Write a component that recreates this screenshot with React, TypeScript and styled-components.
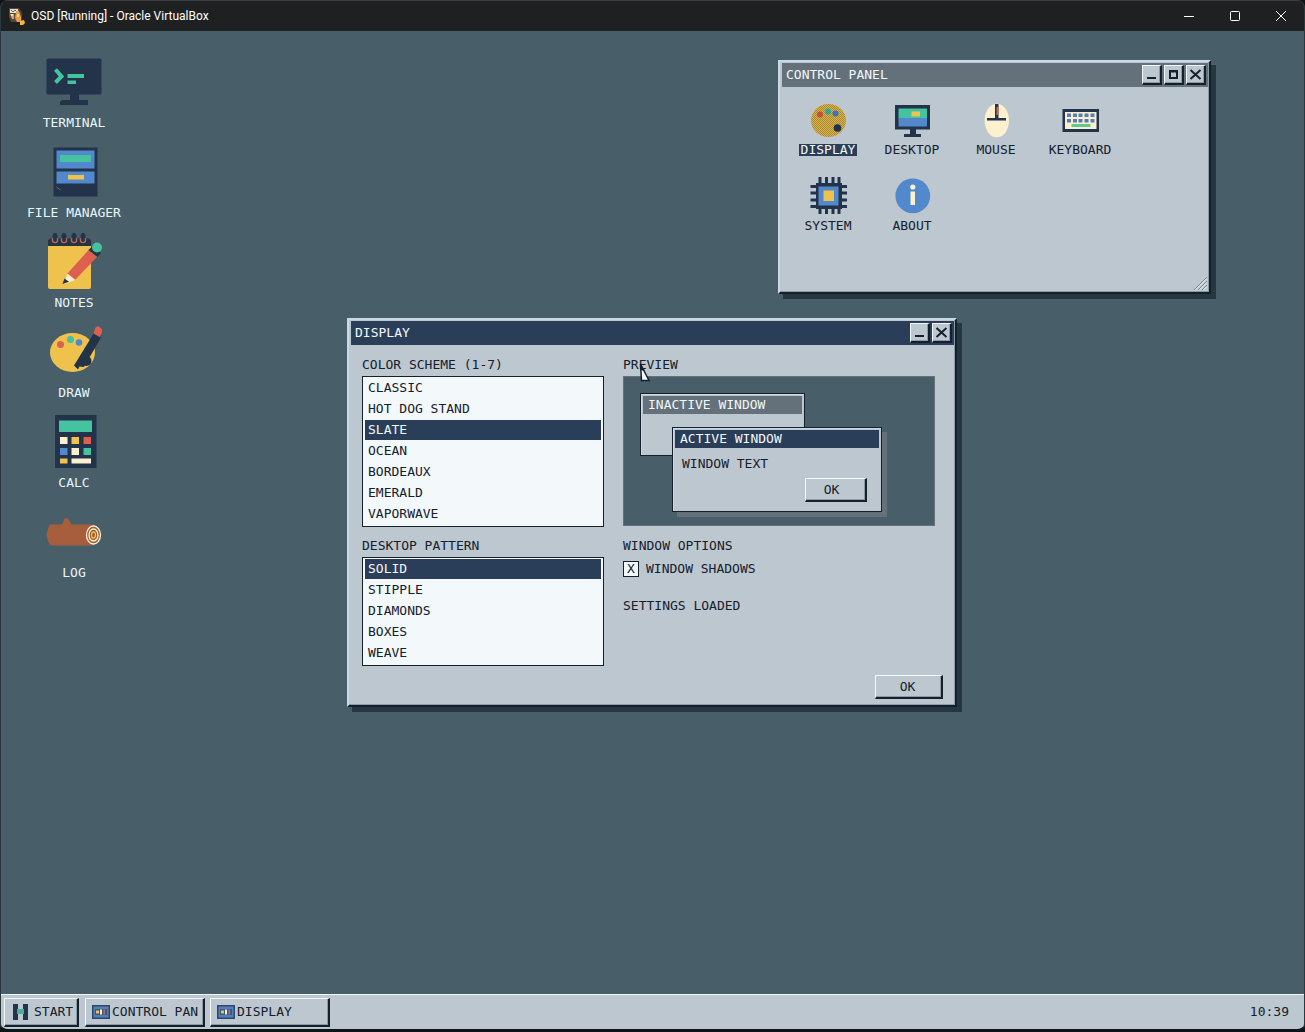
import React, { useState } from "react";
import styled, { createGlobalStyle, css } from "styled-components";

const c = {
  desk: "#485e69",
  panel: "#bdc7d0",
  light: "#c9dae4",
  white: "#f3f8fa",
  ink: "#14202b",
  navy: "#2b3e59",
  slate: "#64717a",
  shadow: "#253740",
  iconNavy: "#22334a",
  green: "#45c2a0",
  blue: "#5288cc",
  yellow: "#eec24c",
  red: "#dd5f50",
  cream: "#fdf0cf",
};

const GlobalStyle = createGlobalStyle`
  *, *::before, *::after { box-sizing: border-box; }
  body { margin: 0; background: #0c1418; }
  button, input { font: inherit; color: inherit; }
`;

const Frame = styled.div`
  min-height: 100vh;
  display: flex;
  flex-direction: column;
  border: solid #2a383f;
  border-width: 0 1px 3px;
  border-bottom-color: #0c1418;
  border-radius: 8px;
  overflow: hidden;
  background: ${c.desk};
  color: ${c.ink};
  font: 13px/16px "DejaVu Sans Mono", monospace;
`;

const HostBar = styled.header`
  display: flex;
  align-items: center;
  height: 31px;
  padding-left: 8px;
  background: #1f2021;
  border-top: 1px solid #3a3c3d;
  color: #fff;
  font: 12px/16px Roboto, sans-serif;
`;

const HostTitle = styled.h1`
  margin: 0 0 0 6px;
  flex: 1;
  font: inherit;
`;

const HostButton = styled.button`
  display: grid;
  place-items: center;
  width: 46px;
  height: 30px;
  padding: 0;
  border: 0;
  background: none;
`;

const Desktop = styled.main`
  position: relative;
  flex: 1;
  padding: 20px 0 0;
`;

const Shortcuts = styled.nav`
  display: flex;
  flex-direction: column;
  width: 146px;
`;

const Shortcut = styled.button`
  display: flex;
  flex-direction: column;
  align-items: center;
  gap: 4px;
  height: 90px;
  padding: 0;
  border: 0;
  background: none;
  color: #eaf6fb;
`;

const WindowBox = styled.section<{ $x: number; $y: number; $w: number }>`
  position: absolute;
  left: ${(p) => p.$x}px;
  top: ${(p) => p.$y}px;
  width: ${(p) => p.$w}px;
  padding: 1px 1px 0 2px;
  border: 2px solid ${c.light};
  border-right-color: ${c.ink};
  border-bottom-color: ${c.ink};
  background: ${c.panel};
  box-shadow: inset -1px -1px 0 #8c9aa5, 5px 5px 0 ${c.shadow};
`;

const TitleBar = styled.header<{ $active?: boolean }>`
  display: flex;
  align-items: center;
  gap: 2px;
  height: 24px;
  padding: 0 2px 1px 4px;
  background: ${(p) => (p.$active ? c.navy : c.slate)};
  color: ${c.white};
`;

const WindowTitle = styled.h2`
  margin: 0;
  flex: 1;
  font: inherit;
`;

const raised = css`
  border: 2px solid ${c.ink};
  border-top: 1px solid ${c.white};
  border-left: 1px solid ${c.white};
  background: ${c.panel};
  box-shadow: inset -1px -1px 0 #8c9aa5;
`;

const FrameButton = styled.button`
  ${raised}
  display: grid;
  place-items: center;
  width: 20px;
  height: 20px;
  padding: 0;
`;

const PanelIcons = styled.div`
  display: grid;
  grid-template-columns: repeat(auto-fill, 84px);
  grid-auto-rows: 76px;
  padding: 13px 4px 0;
`;

const PanelItem = styled.button`
  display: flex;
  flex-direction: column;
  align-items: center;
  gap: 4px;
  padding: 0;
  border: 0;
  background: none;
`;

const PanelLabel = styled.span<{ $selected?: boolean }>`
  padding: 0 2px;
  line-height: 12px;
  background: ${(p) => (p.$selected ? c.navy : "transparent")};
  color: ${(p) => (p.$selected ? c.white : c.ink)};
`;

const PanelFoot = styled.footer`
  display: flex;
  justify-content: flex-end;
  height: 40px;
  align-items: flex-end;
  padding: 0 1px 2px;
`;

const Settings = styled.div`
  display: grid;
  grid-template-columns: 242px 1fr;
  gap: 11px 19px;
  padding: 12px 19px 0 11px;
`;

const Group = styled.fieldset`
  display: flex;
  flex-direction: column;
  min-width: 0;
  margin: 0;
  padding: 0;
  border: 0;
`;

const Caption = styled.legend`
  padding: 0;
  margin-bottom: 3px;
`;

const List = styled.div`
  display: flex;
  flex-direction: column;
  gap: 1px;
  padding: 1px;
  padding-bottom: 2px;
  border: 1px solid ${c.ink};
  background: ${c.white};
`;

const Option = styled.label`
  display: flex;
  align-items: center;
  height: 20px;
  margin: 0 1px;
  padding-left: 3px;
  &:has(input:checked) {
    background: ${c.navy};
    color: ${c.white};
  }
`;

const Radio = styled.input`
  appearance: none;
  width: 0;
  height: 0;
  margin: 0;
`;

const Preview = styled.div`
  position: relative;
  height: 150px;
  border: 1px solid ${c.slate};
  background: ${c.desk};
`;

const Mini = styled.div<{ $x: number; $y: number; $w: number; $h: number; $shadow?: boolean }>`
  position: absolute;
  left: ${(p) => p.$x}px;
  top: ${(p) => p.$y}px;
  width: ${(p) => p.$w}px;
  height: ${(p) => p.$h}px;
  display: flex;
  flex-direction: column;
  padding: 2px;
  border: 1px solid ${c.ink};
  background: ${c.panel};
  box-shadow: inset 1px 1px 0 ${c.light}${(p) => (p.$shadow ? `, 5px 5px 0 ${c.slate}` : "")};
`;

const MiniTitle = styled.div<{ $active?: boolean }>`
  height: 18px;
  line-height: 18px;
  padding-left: 5px;
  background: ${(p) => (p.$active ? c.navy : c.slate)};
  color: ${c.white};
`;

const MiniBody = styled.div`
  display: flex;
  flex-direction: column;
  padding: 8px 12px 0 7px;
  gap: 6px;
`;

const PushButton = styled.button<{ $small?: boolean }>`
  ${raised}
  align-self: flex-end;
  width: ${(p) => (p.$small ? 62 : 68)}px;
  height: 24px;
  padding: 0 ${(p) => (p.$small ? 8 : 2)}px 0 0;
  line-height: 16px;
`;

const CheckRow = styled.label`
  display: flex;
  align-items: center;
  gap: 7px;
  margin-top: 4px;
`;

const Check = styled.input`
  appearance: none;
  display: grid;
  place-items: center;
  width: 16px;
  height: 16px;
  margin: 0;
  border: 1px solid ${c.ink};
  background: ${c.white};
  font-size: 13px;
  line-height: 14px;
  &:checked::before {
    content: "X";
  }
`;

const Status = styled.output`
  margin-top: 21px;
`;

const DialogFoot = styled.footer`
  display: flex;
  justify-content: flex-end;
  padding: 9px 11px 6px;
`;

const Taskbar = styled.footer`
  display: flex;
  align-items: center;
  gap: 5px;
  height: 35px;
  padding: 0 15px 0 3px;
  border-top: 1px solid ${c.white};
  background: ${c.panel};
`;

const TaskButton = styled.button<{ $start?: boolean }>`
  ${raised}
  display: flex;
  align-items: center;
  gap: ${(p) => (p.$start ? 5 : 2)}px;
  width: ${(p) => (p.$start ? 75 : 120)}px;
  height: 29px;
  margin-right: ${(p) => (p.$start ? 1 : 0)}px;
  padding: 0 0 0 ${(p) => (p.$start ? 8 : 6)}px;
  white-space: nowrap;
`;

const Clock = styled.time`
  margin-left: auto;
`;

const Pointer = styled.svg`
  position: absolute;
  left: 637px;
  top: 331px;
`;

const Art = ({ size, children }: { size: number; children: React.ReactNode }) => (
  <svg width={size} height={size} viewBox={`0 0 ${size} ${size}`} aria-hidden="true">
    {children}
  </svg>
);

const terminalArt = (
  <>
    <rect x="2.5" y="7.5" width="55" height="36" rx="1.5" fill={c.iconNavy} />
    <path d="M26 43h9v6h9v5H16v-3l2-2h8z" fill={c.iconNavy} />
    <path d="M11.5 18.5l6 7-6 6" fill="none" stroke={c.green} strokeWidth="4" />
    <path d="M23.5 23H40v4H23.500zM23.500 29.500H32V33h-8.500z" fill={c.green} />
  </>
);

const cabinetArt = (
  <>
    <rect x="9.5" y="6.5" width="44" height="49" fill={c.iconNavy} />
    <path d="M12.5 9.5h38v18h-38zM12.5 30.5h38v12h-38z" fill={c.blue} />
    <path d="M16 14h31v7H16z" fill={c.green} />
    <path d="M24 34h16v4.500H24z" fill={c.yellow} />
    <path d="M12.5 46l4 3" stroke="#617181" />
  </>
);

const notesArt = (
  <>
    <rect x="4" y="12" width="43" height="46" rx="2" fill={c.yellow} />
    <path d="M6 7.5h39l2 2V15H4V9.500z" fill={c.iconNavy} />
    {[11, 20, 30, 39].map((x) => (
      <g key={x}>
        <circle cx={x} cy="9" r="2.6" fill="none" stroke="#c0684c" strokeWidth="1.4" />
        <path d={`M${x} 2v7`} stroke={c.iconNavy} strokeWidth="3" />
        <path d={`M${x - 2.5} 5.500h5`} stroke={c.iconNavy} strokeWidth="3.5" />
      </g>
    ))}
    <path d="M23 43L45 18.500l8.500 7L31 49z" fill={c.red} />
    <path d="M23.500 42.500l8 6.500L20 53z" fill={c.cream} />
    <path d="M20.500 47.500l4.500 3.200L18.500 53z" fill={c.iconNavy} />
    <path d="M44.500 19l4-4 8.500 7-3.500 4z" fill={c.iconNavy} />
    <circle cx="53" cy="16.500" r="5" fill={c.green} />
  </>
);

const drawArt = (
  <>
    <ellipse cx="28.5" cy="31.5" rx="22.5" ry="19.5" fill={c.yellow} />
    <circle cx="16.5" cy="23.500" r="3.500" fill={c.red} />
    <circle cx="26.5" cy="18.500" r="3.500" fill={c.green} />
    <circle cx="35" cy="21.500" r="3.300" fill={c.blue} />
    <circle cx="42.500" cy="40" r="5" fill={c.iconNavy} />
    <path d="M50 12l7 4.500L40 46l-4.500-.5-1.500 3-4-4z" fill={c.iconNavy} />
    <path d="M49.500 12.500l2-6 2.500-1.500 4 3v3.500l-2.500 4.500z" fill={c.red} />
  </>
);

const calcArt = (
  <>
    <rect x="11" y="4" width="41.500" height="53" fill={c.iconNavy} />
    <path d="M15 9.500h33V21H15z" fill={c.green} />
    <path d="M16 26h7.500v7H16zM27.500 37H35v7h-7.500zM27.500 47.500H47v5H27.500z" fill={c.cream} />
    <path d="M27.500 26H35v7h-7.500zM16 47.500h7.500v5H16z" fill={c.yellow} />
    <path d="M39.500 26H47v7h-7.500z" fill={c.red} />
    <path d="M16 37h7.500v7H16z" fill={c.blue} />
    <path d="M39.500 37H47v7h-7.500z" fill={c.green} />
  </>
);

const logArt = (
  <>
    <path d="M6 23.500h12l2-5 3-2 5 7h22v21H7l-3-4-1.500-7 1.500-6z" fill="#a65e3c" />
    <g fill="#9b5a35" stroke={c.cream} strokeWidth="1.300">
      <ellipse cx="49.500" cy="34" rx="7" ry="9" />
      <ellipse cx="49.500" cy="34" rx="4.500" ry="6" />
      <ellipse cx="49.500" cy="34" rx="2" ry="3" stroke={c.yellow} />
    </g>
  </>
);

const paletteArt = (
  <>
    <defs>
      <pattern id="dither" width="2" height="2" patternUnits="userSpaceOnUse">
        <path d="M0 0h1v1H0zM1 1h1v1H1z" fill={c.navy} fillOpacity="0.38" />
      </pattern>
    </defs>
    <ellipse cx="20.500" cy="20.500" rx="17.500" ry="16.500" fill="#e4b43a" />
    <circle cx="12" cy="14.500" r="3" fill="#e5553f" />
    <circle cx="20" cy="11.500" r="3" fill="#30c2a0" />
    <circle cx="27.500" cy="13.500" r="3" fill="#3f7fd6" />
    <ellipse cx="20.500" cy="20.500" rx="17.500" ry="16.500" fill="url(#dither)" />
    <circle cx="29.500" cy="28" r="3.800" fill={c.iconNavy} />
  </>
);

const monitorArt = (
  <>
    <path d="M3 5h35v24.500H24V34h5v3H12v-3h6v-4.500H3z" fill={c.iconNavy} />
    <path d="M6.500 8.500H35V18H6.500z" fill={c.green} />
    <path d="M6.500 18H35v8.500H6.500z" fill={c.blue} />
    <path d="M19.500 11.500H28v5h-8.500z" fill={c.yellow} />
  </>
);

const mouseArt = (
  <>
    <ellipse cx="20.800" cy="20.500" rx="12.200" ry="16.800" fill={c.cream} />
    <path d="M19 4h3.500v14H30v2.500H11V18h8z" fill={c.iconNavy} />
    <path d="M20.500 7h2v8h-2z" fill={c.red} />
  </>
);

const keyboardArt = (
  <>
    <path d="M2.500 9H39v23H2.500z" fill={c.iconNavy} />
    <path d="M5 12h31.500v17H5z" fill={c.cream} />
    {[7, 13, 18.5, 24.5, 30.5].map((x) => (
      <path key={x} d={`M${x} 13.500h4V17h-4zM${x} 19h4v3.500h-4z`} fill="#557fba" />
    ))}
    <path d="M11.500 24h19v3h-19z" fill="#62c892" />
  </>
);

const chipArt = (
  <>
    <path
      d="M12 1v37M18.500 1v37M25 1v37M31 1v37M2.500 10.500H39M2.500 17H39M2.500 24H39M2.500 30.500H39"
      stroke={c.iconNavy}
      strokeWidth="3"
    />
    <path d="M8 7h26v26H8z" fill={c.iconNavy} />
    <path d="M10.500 10.500h20v19h-20z" fill={c.blue} />
    <path d="M15.500 14.500H26V25H15.500z" fill={c.yellow} />
  </>
);

const infoArt = (
  <>
    <circle cx="20.800" cy="19.800" r="17.400" fill={c.blue} />
    <circle cx="20.800" cy="11" r="2.600" fill={c.cream} />
    <path d="M18.500 15.500H23V29h-4.500z" fill={c.cream} />
  </>
);

const shortcuts: [string, React.ReactNode][] = [
  ["TERMINAL", terminalArt],
  ["FILE MANAGER", cabinetArt],
  ["NOTES", notesArt],
  ["DRAW", drawArt],
  ["CALC", calcArt],
  ["LOG", logArt],
];

const panelItems: [string, React.ReactNode][] = [
  ["DISPLAY", paletteArt],
  ["DESKTOP", monitorArt],
  ["MOUSE", mouseArt],
  ["KEYBOARD", keyboardArt],
  ["SYSTEM", chipArt],
  ["ABOUT", infoArt],
];

const schemes = ["CLASSIC", "HOT DOG STAND", "SLATE", "OCEAN", "BORDEAUX", "EMERALD", "VAPORWAVE"];
const patterns = ["SOLID", "STIPPLE", "DIAMONDS", "BOXES", "WEAVE"];

const glyphs = {
  Minimize: <path d="M4 12h9" strokeWidth="2" />,
  Maximize: <path d="M5 5h7v7H5zM4 5.500h9" strokeWidth="2" />,
  Close: <path d="M3.500 4l10 9M13.500 4l-10 9" strokeWidth="2" />,
};

const WindowControl = ({ kind }: { kind: keyof typeof glyphs }) => (
  <FrameButton type="button" aria-label={kind}>
    <svg width="17" height="17" viewBox="0 0 17 17" fill="none" stroke={c.ink}>
      {glyphs[kind]}
    </svg>
  </FrameButton>
);

const ChoiceList = ({ caption, name, items, initial }: { caption: string; name: string; items: string[]; initial: string }) => {
  const [value, setValue] = useState(initial);
  return (
    <Group>
      <Caption>{caption}</Caption>
      <List>
        {items.map((item) => (
          <Option key={item}>
            <Radio type="radio" name={name} checked={value === item} onChange={() => setValue(item)} />
            {item}
          </Option>
        ))}
      </List>
    </Group>
  );
};

const TaskIcon = () => (
  <svg width="18" height="14" viewBox="0 0 18 14" aria-hidden="true">
    <path d="M0 0h18v14H0z" fill="#2d466c" />
    <path d="M1.500 1.500h15v11h-15z" fill="#5680b4" />
    <path d="M3 4h12v6H3z" fill="#375987" />
    <path d="M4 5.500h3v3H4z" fill={c.yellow} />
    <path d="M8 4.500h2v5H8z" fill={c.cream} />
    <path d="M11.500 4.500H13v5h-1.500z" fill="#b9736e" />
  </svg>
);

const hostGlyphs: [string, string][] = [
  ["Minimize window", "M1 6.500h10"],
  ["Maximize window", "M2.500 1.500h7a1 1 0 0 1 1 1v7a1 1 0 0 1-1 1h-7a1 1 0 0 1-1-1v-7a1 1 0 0 1 1-1z"],
  ["Close window", "M1 1l10 10M11 1L1 11"],
];

export default function App() {
  const [shadows, setShadows] = useState(true);
  return (
    <>
      <GlobalStyle />
      <Frame>
        <HostBar>
          <svg width="16" height="17" viewBox="0 0 16 17" aria-hidden="true">
            <path d="M0 0h10l3 5v9H2L0 9z" fill="#4d4a45" />
            <path d="M1 1h8v4H1z" fill="#e5dfcf" />
            <path d="M2 2l2 2 2-2 2 2" stroke="#54803a" fill="none" />
            <path d="M1 6h4v5H3zM7 3h3l2 6v5H8l-2-4z" fill="#ef9b48" />
            <path d="M2 6h2v2H2zM8 6h2v3H8z" fill="#f9d9a4" />
            <path d="M11 13l4-1 1 3-2 2h-3z" fill="#f4b73f" />
          </svg>
          <HostTitle>OSD [Running] - Oracle VirtualBox</HostTitle>
          {hostGlyphs.map(([label, d]) => (
            <HostButton key={label} type="button" aria-label={label}>
              <svg width="12" height="12" viewBox="0 0 12 12" fill="none" stroke="#fff">
                <path d={d} />
              </svg>
            </HostButton>
          ))}
        </HostBar>

        <Desktop>
          <Shortcuts aria-label="Desktop">
            {shortcuts.map(([label, art]) => (
              <Shortcut key={label} type="button">
                <Art size={60}>{art}</Art>
                {label}
              </Shortcut>
            ))}
          </Shortcuts>

          <WindowBox $x={777} $y={29} $w={433}>
            <TitleBar>
              <WindowTitle>CONTROL PANEL</WindowTitle>
              <WindowControl kind="Minimize" />
              <WindowControl kind="Maximize" />
              <WindowControl kind="Close" />
            </TitleBar>
            <PanelIcons>
              {panelItems.map(([label, art], i) => (
                <PanelItem key={label} type="button">
                  <Art size={40}>{art}</Art>
                  <PanelLabel $selected={i === 0}>{label}</PanelLabel>
                </PanelItem>
              ))}
            </PanelIcons>
            <PanelFoot>
              <svg width="13" height="13" viewBox="0 0 13 13" aria-hidden="true">
                <path d="M0 13L13 0M4 13l9-9M8 13l5-5" stroke="#7a8894" />
                <path d="M1.500 13L13 1.500M5.500 13L13 5.500M9.500 13L13 9.500" stroke="#e6eef3" />
              </svg>
            </PanelFoot>
          </WindowBox>

          <WindowBox $x={346} $y={287} $w={610}>
            <TitleBar $active>
              <WindowTitle>DISPLAY</WindowTitle>
              <WindowControl kind="Minimize" />
              <WindowControl kind="Close" />
            </TitleBar>
            <Settings>
              <ChoiceList caption="COLOR SCHEME (1-7)" name="scheme" items={schemes} initial="SLATE" />
              <Group>
                <Caption>PREVIEW</Caption>
                <Preview>
                  <Mini $x={16} $y={16} $w={165} $h={63}>
                    <MiniTitle>INACTIVE WINDOW</MiniTitle>
                  </Mini>
                  <Mini $x={48} $y={50} $w={210} $h={85} $shadow={shadows}>
                    <MiniTitle $active>ACTIVE WINDOW</MiniTitle>
                    <MiniBody>
                      WINDOW TEXT
                      <PushButton type="button" $small>
                        OK
                      </PushButton>
                    </MiniBody>
                  </Mini>
                </Preview>
              </Group>
              <ChoiceList caption="DESKTOP PATTERN" name="pattern" items={patterns} initial="SOLID" />
              <Group>
                <Caption>WINDOW OPTIONS</Caption>
                <CheckRow>
                  <Check type="checkbox" checked={shadows} onChange={(e) => setShadows(e.target.checked)} />
                  WINDOW SHADOWS
                </CheckRow>
                <Status>SETTINGS LOADED</Status>
              </Group>
            </Settings>
            <DialogFoot>
              <PushButton type="button">OK</PushButton>
            </DialogFoot>
          </WindowBox>

          <Pointer width="14" height="22" viewBox="0 0 14 22" aria-hidden="true">
            <path d="M2.500 2l1 16.500H11z" fill="#f6fafc" stroke={c.ink} strokeWidth="1.500" />
            <path d="M2 1l5 8-4.500-1z" fill={c.ink} />
          </Pointer>
        </Desktop>

        <Taskbar>
          <TaskButton type="button" $start>
            <svg width="16" height="16" viewBox="0 0 16 16" aria-hidden="true">
              <path d="M0 0h5v16H0zM10 0h5v16h-5z" fill={c.iconNavy} />
              <path d="M4 5h7v5H4z" fill="#4fae9a" />
            </svg>
            START
          </TaskButton>
          <TaskButton type="button">
            <TaskIcon />
            CONTROL PAN
          </TaskButton>
          <TaskButton type="button">
            <TaskIcon />
            DISPLAY
          </TaskButton>
          <Clock>10:39</Clock>
        </Taskbar>
      </Frame>
    </>
  );
}
